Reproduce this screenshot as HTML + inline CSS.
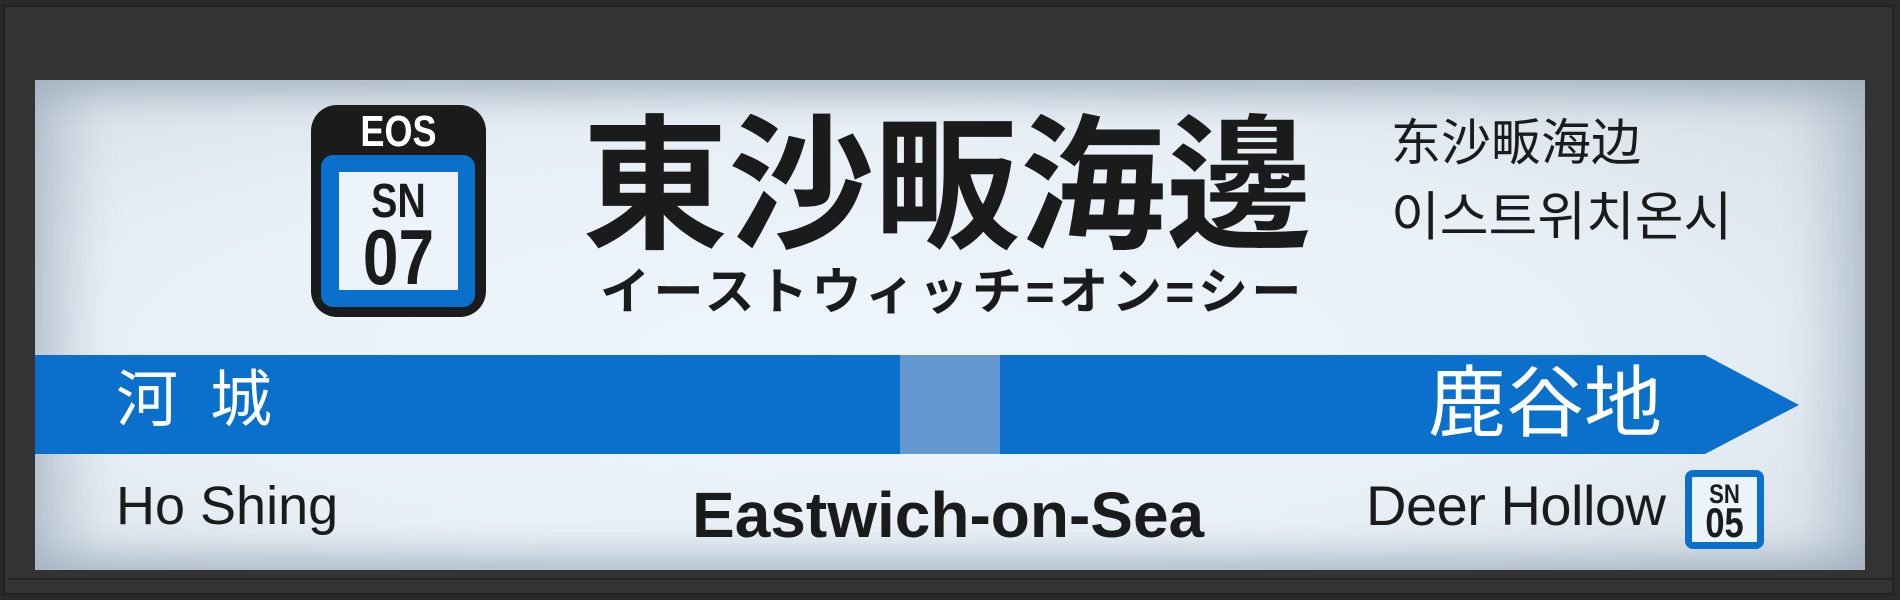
<!DOCTYPE html>
<html><head><meta charset="utf-8"><style>
*{margin:0;padding:0;box-sizing:border-box}
body{width:1900px;height:600px;background:#2a2a2a;position:relative;overflow:hidden;font-family:"Liberation Sans","Noto Sans CJK JP",sans-serif}
.frame{position:absolute;left:3px;top:5px;width:1891px;height:590px;background:#333;border:2px solid #222}
.botline{position:absolute;left:8px;top:578px;width:1884px;height:2px;background:#262626}
.panel{position:absolute;left:35px;top:80px;width:1830px;height:490px;background:radial-gradient(ellipse at 45% 55%,#eef5fd 0%,#e8eff7 55%,#dae2ea 85%,#ccd4dd 100%);box-shadow:inset 0 18px 30px rgba(150,165,180,.4),inset 0 -18px 30px rgba(150,165,180,.35),inset 45px 0 40px rgba(150,165,180,.35),inset -45px 0 40px rgba(150,165,180,.35)}
.abs{position:absolute;white-space:nowrap}
.cjk{font-family:"Liberation Sans","Noto Sans CJK JP",sans-serif}
.badge{position:absolute;left:311px;top:105px;width:175px;height:212px;background:#1b1b1b;border-radius:26px}
.badge .eos{position:absolute;left:0;width:175px;top:2px;text-align:center;color:#fff;font:bold 44px "Liberation Sans",sans-serif;transform:scaleX(.82)}
.badge .blue{position:absolute;left:10px;top:50px;width:154px;height:152px;background:#0b70cc;border-radius:12px}
.badge .white{position:absolute;left:18px;top:17px;width:119px;height:118px;background:#ecf3fb}
.num{text-align:center;color:#1b1b1b;font-family:"Liberation Sans",sans-serif;font-weight:bold;transform:scaleX(.82)}
</style></head><body>
<div class="frame"></div>
<div class="botline"></div>
<div class="panel"></div>
<div class="badge"><div class="eos">EOS</div><div class="blue"><div class="white">
<div class="abs num" style="left:0;width:119px;top:2px;font-size:48px">SN</div>
<div class="abs num" style="left:0;width:119px;top:40px;font-size:78px">07</div>
</div></div></div>
<div class="abs cjk" style="left:582px;top:102px;font-size:146px;font-weight:bold;color:#1b1b1b;line-height:170px">東沙畈海邊</div>
<div class="abs cjk" style="left:600px;top:262px;font-size:50px;font-weight:bold;color:#1b1b1b;line-height:60px;letter-spacing:3.5px">イーストウィッチ=オン=シー</div>
<div class="abs" style="left:1391px;top:113px;font:50px 'Liberation Sans','Noto Sans CJK SC',sans-serif;color:#1b1b1b;line-height:60px">东沙畈海边</div>
<div class="abs" style="left:1391px;top:188px;font:53px 'Liberation Sans','Noto Sans CJK KR',sans-serif;color:#1b1b1b;line-height:60px">이스트위치온시</div>
<svg class="abs" style="left:35px;top:355px" width="1770" height="100"><polygon points="0,0 1670,0 1764,50 1670,99 0,99" fill="#0b70cc"/><rect x="865" y="0" width="100" height="99" fill="#6499cf"/></svg>
<div class="abs cjk" style="left:116px;top:366px;font-size:62px;color:#fff;line-height:70px;letter-spacing:32px">河城</div>
<div class="abs cjk" style="left:1428px;top:360px;font-size:78px;color:#fff;line-height:86px">鹿谷地</div>
<div class="abs" style="left:116px;top:476px;font-size:54px;color:#1b1b1b;line-height:60px">Ho Shing</div>
<div class="abs" style="left:692px;top:480px;font-size:64px;font-weight:bold;color:#1b1b1b;line-height:70px">Eastwich-on-Sea</div>
<div class="abs" style="left:1366px;top:476px;font-size:56px;color:#1b1b1b;line-height:60px;letter-spacing:-0.5px">Deer Hollow</div>
<div class="abs" style="left:1685px;top:470px;width:79px;height:79px;border:7px solid #0b70cc;border-radius:8px;background:#ecf3fb">
<div class="abs num" style="left:0;width:65px;top:2px;font-size:27px">SN</div>
<div class="abs num" style="left:0;width:65px;top:22px;font-size:42px">05</div>
</div>
</body></html>
